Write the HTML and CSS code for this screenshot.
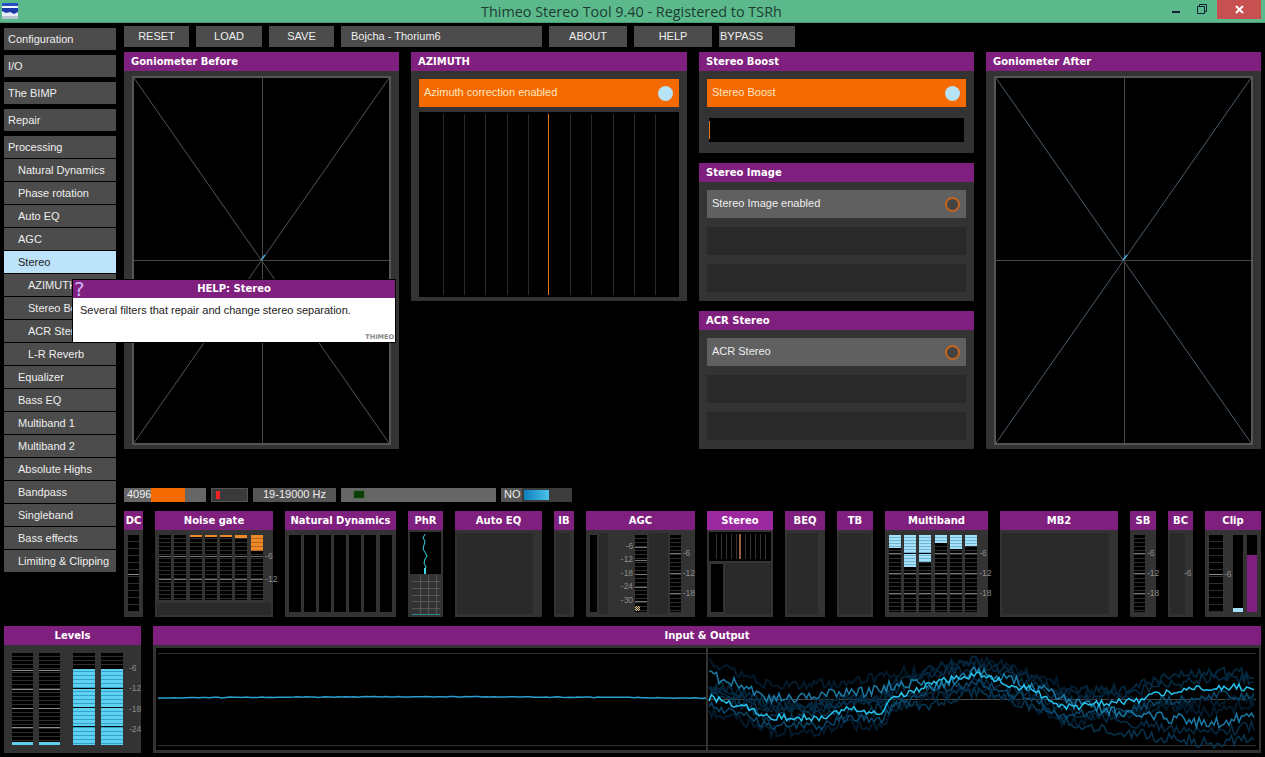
FILE: index.html
```html
<!DOCTYPE html>
<html lang="en">
<head>
    <meta charset="UTF-8">
    <title>Thimeo Stereo Tool 9.40 - Registered to TSRh</title>
    <link rel="stylesheet" href="styles.css">
</head>
<body>
    <div class="titlebar">
        <svg class="app-icon" width="16" height="16" viewBox="0 0 16 16">
            <rect width="16" height="16" fill="#e8eef5"/>
            <rect width="16" height="3" fill="#2a4fc0"/>
            <rect y="3" width="16" height="2" fill="#f4f8ff"/>
            <path d="M0 5H16V9L12 11L8 9L4 10L0 8Z" fill="#1b3aa8"/>
            <rect y="13" width="16" height="3" fill="#b8c4d0"/>
        </svg>
        <div class="title-text">Thimeo Stereo Tool 9.40 - Registered to TSRh</div>
        <div class="win-buttons">
            <div class="win-min"></div>
            <svg class="win-restore" width="10" height="10" viewBox="0 0 10 10">
                <path d="M2.5 2.5V.5H9.5V7.5H7.5M.5 2.5H7.5V9.5H.5Z" fill="none" stroke="#123" stroke-width="1"/>
            </svg>
            <div class="win-close">
                <svg width="9" height="9" viewBox="0 0 9 9"><path d="M1 1L8 8M8 1L1 8" stroke="#fff" stroke-width="2"/></svg>
            </div>
        </div>
    </div>

    <div class="main">
        <div class="side">
            <div class="nav nav-top">Configuration</div>
            <div class="nav nav-top">I/O</div>
            <div class="nav nav-top">The BIMP</div>
            <div class="nav nav-top">Repair</div>
            <div class="nav">Processing</div>
            <div class="nav lvl1">Natural Dynamics</div>
            <div class="nav lvl1">Phase rotation</div>
            <div class="nav lvl1">Auto EQ</div>
            <div class="nav lvl1">AGC</div>
            <div class="nav lvl1 nav-active">Stereo</div>
            <div class="nav lvl2">AZIMUTH</div>
            <div class="nav lvl2">Stereo Boost</div>
            <div class="nav lvl2">ACR Stereo</div>
            <div class="nav lvl2">L-R Reverb</div>
            <div class="nav lvl1">Equalizer</div>
            <div class="nav lvl1">Bass EQ</div>
            <div class="nav lvl1">Multiband 1</div>
            <div class="nav lvl1">Multiband 2</div>
            <div class="nav lvl1">Absolute Highs</div>
            <div class="nav lvl1">Bandpass</div>
            <div class="nav lvl1">Singleband</div>
            <div class="nav lvl1">Bass effects</div>
            <div class="nav lvl1">Limiting &amp; Clipping</div>
        </div>

        <div class="content">
            <div class="toolbar">
                <div class="btn w65">RESET</div>
                <div class="btn w66">LOAD</div>
                <div class="btn w65">SAVE</div>
                <div class="btn btn-left w201">Bojcha - Thorium6</div>
                <div class="btn w78">ABOUT</div>
                <div class="btn w78">HELP</div>
                <div class="btn btn-bypass w76">BYPASS</div>
            </div>

            <div class="panels">
                <div class="col">
                    <div class="panel panel-gonio">
                        <div class="panel-head">Goniometer Before</div>
                        <div class="gonio">
                            <svg width="255" height="365" viewBox="0 0 255 365">
                                <path d="M0 0L255 365M255 0L0 365" stroke="#565656" fill="none"/>
                                <path d="M128.500 0V365M0 182.500H255" stroke="#484848" fill="none"/>
                                <path d="M127 182L131 177" stroke="#3fa9d8" stroke-width="1.5"/>
                            </svg>
                        </div>
                    </div>
                </div>

                <div class="col col-wide">
                    <div class="panel panel-azimuth">
                        <div class="panel-head">AZIMUTH</div>
                        <div class="toggle toggle-on">Azimuth correction enabled<span class="dot"></span></div>
                        <div class="azi-graph">
                            <svg width="260" height="185" viewBox="0 0 260 185">
                                <path d="M24.500 2V183M45.500 2V183M66.500 2V183M88.500 2V183M109.500 2V183M151.500 2V183M172.500 2V183M194.500 2V183M215.500 2V183M236.500 2V183" stroke="#2a2a2a"/>
                                <path d="M129.500 2V183" stroke="#e07a20"/>
                            </svg>
                        </div>
                    </div>
                </div>

                <div class="col">
                    <div class="panel panel-boost">
                        <div class="panel-head">Stereo Boost</div>
                        <div class="toggle toggle-on">Stereo Boost<span class="dot"></span></div>
                        <div class="boost-bar"><div class="boost-mark"></div></div>
                    </div>
                    <div class="panel panel-image">
                        <div class="panel-head">Stereo Image</div>
                        <div class="toggle toggle-off">Stereo Image enabled<span class="dot dot-off"></span></div>
                        <div class="empty-row"></div>
                        <div class="empty-row"></div>
                    </div>
                    <div class="panel panel-image">
                        <div class="panel-head">ACR Stereo</div>
                        <div class="toggle toggle-off">ACR Stereo<span class="dot dot-off"></span></div>
                        <div class="empty-row"></div>
                        <div class="empty-row"></div>
                    </div>
                </div>

                <div class="col">
                    <div class="panel panel-gonio">
                        <div class="panel-head">Goniometer After</div>
                        <div class="gonio">
                            <svg width="255" height="365" viewBox="0 0 255 365">
                                <path d="M0 0L255 365M255 0L0 365" stroke="#4f5f6e" fill="none"/>
                                <path d="M128.500 0V365M0 182.500H255" stroke="#484848" fill="none"/>
                                <path d="M127 182L131 177" stroke="#3fa9d8" stroke-width="1.5"/>
                            </svg>
                        </div>
                    </div>
                </div>
            </div>

            <div class="status">
                <div class="st st-buffer">4096<div class="st-orange"></div></div>
                <div class="st st-red"><div class="st-redmark"></div></div>
                <div class="st st-hz">19-19000 Hz</div>
                <div class="st st-green"><div class="st-greenmark"></div></div>
                <div class="st st-no">NO<div class="st-track"><div class="st-blue"></div></div></div>
            </div>

            <div class="modules">
                <div class="mod w19">
                    <div class="mod-head">DC</div>
                    <div class="mod-body pad-meter"><div class="meter meter-wide ticks-dc m11 h77"></div></div>
                </div>

                <div class="mod w118">
                    <div class="mod-head">Noise gate</div>
                    <div class="mod-body gate">
                        <div class="gate-row">
                            <div class="meter ticks-gate m12 h65"></div>
                            <div class="meter ticks-gate m12 h65"></div>
                            <div class="meter ticks-gate m12 h65"><div class="fill fill-orange f2"></div></div>
                            <div class="meter ticks-gate m12 h65"><div class="fill fill-orange f2"></div></div>
                            <div class="meter ticks-gate m12 h65"><div class="fill fill-orange f2"></div></div>
                            <div class="meter ticks-gate m12 h65"><div class="fill fill-orange f3"></div></div>
                            <div class="meter ticks-gate m12 h65"><div class="fill fill-orange f16"></div></div>
                            <div class="scale scale-gate"><span>-6</span><span>-12</span></div>
                        </div>
                        <div class="gate-foot"></div>
                    </div>
                </div>

                <div class="mod w111">
                    <div class="mod-head">Natural Dynamics</div>
                    <div class="mod-body nd-row">
                        <div class="plain m12 h77"></div><div class="plain m12 h77"></div><div class="plain m12 h77"></div>
                        <div class="plain m12 h77"></div><div class="plain m12 h77"></div><div class="plain m12 h77"></div>
                        <div class="plain m12 h77"></div>
                    </div>
                </div>

                <div class="mod w35">
                    <div class="mod-head">PhR</div>
                    <div class="mod-body phr">
                        <svg class="phr-top" width="31" height="42" viewBox="0 0 31 42">
                            <path d="M15 2L13 6L15 9L14 13L13 17L15 20L17 24L15 27L14 31L16 35L15 38" stroke="#3fd8e8" fill="none"/>
                            <path d="M15 36V42" stroke="#3fd8e8" stroke-width="2"/>
                        </svg>
                        <svg class="phr-grid" width="31" height="43" viewBox="0 0 31 43">
                            <path d="M2 7.5H30M2 14.5H30M2 21.5H30M2 27.5H30M2 34.5H30M10.5 1V40M18.5 1V40M26.5 1V40" stroke="#555"/>
                            <path d="M2 40.5H30" stroke="#2a8a90"/>
                        </svg>
                    </div>
                </div>

                <div class="mod w87">
                    <div class="mod-head">Auto EQ</div>
                    <div class="mod-body pad-inner"><div class="inner w76"></div></div>
                </div>

                <div class="mod w20">
                    <div class="mod-head">IB</div>
                    <div class="mod-body pad-inner"><div class="inner w14"></div></div>
                </div>

                <div class="mod w109">
                    <div class="mod-head">AGC</div>
                    <div class="mod-body agc">
                        <div class="plain m11 h77"></div>
                        <div class="inner w15 agc-h"></div>
                        <div class="scale scale-agc"><span>-6</span><span>-12</span><span>-18</span><span>-24</span><span>-30</span></div>
                        <div class="meter ticks-agc m12 h77"><div class="checker"></div></div>
                        <div class="inner w30 agc-h"></div>
                        <div class="meter ticks-20 m11 h77"></div>
                        <div class="scale scale-20"><span>-6</span><span>-12</span><span>-18</span></div>
                    </div>
                </div>

                <div class="mod w66 mod-active">
                    <div class="mod-head">Stereo</div>
                    <div class="mod-body st-mod">
                        <svg class="st-top" width="62" height="29" viewBox="0 0 62 29">
                            <path d="M7.5 2V27M12.500 2V27M17.500 2V27M22.500 2V27M27.500 2V27M36.500 2V27M41.500 2V27M46.500 2V27M51.500 2V27M56.500 2V27" stroke="#333"/>
                            <path d="M31 2V27" stroke="#c88058" stroke-width="1.5"/>
                        </svg>
                        <div class="st-low">
                            <div class="plain m12 st-low-m"></div>
                            <div class="inner w46 st-low-i"></div>
                        </div>
                    </div>
                </div>

                <div class="mod w40">
                    <div class="mod-head">BEQ</div>
                    <div class="mod-body pad-inner"><div class="inner w31"></div></div>
                </div>

                <div class="mod w36">
                    <div class="mod-head">TB</div>
                    <div class="mod-body pad-inner"><div class="inner w32"></div></div>
                </div>

                <div class="mod w103">
                    <div class="mod-head">Multiband</div>
                    <div class="mod-body mb">
                        <div class="meter ticks-20 m12 h77"><div class="fill fill-light f13"></div></div>
                        <div class="meter ticks-20 m12 h77"><div class="fill fill-light f32"></div></div>
                        <div class="meter ticks-20 m12 h77"><div class="fill fill-light f27"></div></div>
                        <div class="meter ticks-20 m12 h77"><div class="fill fill-light f8"></div></div>
                        <div class="meter ticks-20 m12 h77"><div class="fill fill-light f14"></div></div>
                        <div class="meter ticks-20 m12 h77"><div class="fill fill-light f11"></div></div>
                        <div class="scale scale-20"><span>-6</span><span>-12</span><span>-18</span></div>
                    </div>
                </div>

                <div class="mod w118">
                    <div class="mod-head">MB2</div>
                    <div class="mod-body pad-inner"><div class="inner w107"></div></div>
                </div>

                <div class="mod w26">
                    <div class="mod-head">SB</div>
                    <div class="mod-body pad-meter sb">
                        <div class="meter ticks-20 m11 h77"></div>
                        <div class="scale scale-20"><span>-6</span><span>-12</span><span>-18</span></div>
                    </div>
                </div>

                <div class="mod w25">
                    <div class="mod-head">BC</div>
                    <div class="mod-body pad-inner bc">
                        <div class="inner w15"></div>
                        <div class="scale scale-bc"><span>-6</span></div>
                    </div>
                </div>

                <div class="mod w56">
                    <div class="mod-head">Clip</div>
                    <div class="mod-body clip">
                        <div class="meter meter-wide ticks-clip clip-m1 h77"></div>
                        <div class="scale scale-clip"><span>-6</span></div>
                        <div class="clip-bar"><div class="clip-blue"></div></div>
                        <div class="clip-bar clip-bar3"><div class="clip-purple"></div></div>
                    </div>
                </div>
            </div>
        </div>
    </div>

    <div class="bottom">
        <div class="mod levels">
            <div class="mod-head">Levels</div>
            <div class="mod-body lev">
                <div class="meter ticks-lev lev-a"><div class="fill-level f-low"></div></div>
                <div class="meter ticks-lev lev-a"><div class="fill-level f-low"></div></div>
                <div class="meter ticks-lev lev-b"><div class="fill-level f-high"></div></div>
                <div class="meter ticks-lev lev-b"><div class="fill-level f-high"></div></div>
                <div class="scale scale-lev"><span>-6</span><span>-12</span><span>-18</span><span>-24</span></div>
            </div>
        </div>
        <div class="mod scope-mod">
            <div class="mod-head">Input &amp; Output</div>
            <div class="mod-body scope-body">
                <svg id="scope" width="1103" height="102" viewBox="0 0 1103 102">
                    <path d="M2 5.500H1100M2 97.500H1100" stroke="#2e2e2e"/>
                    <path d="M552 51.500H1100" stroke="#4a4a4a"/>
                    <path d="M551 0V102" stroke="#333" stroke-width="2"/>
                </svg>
            </div>
        </div>
    </div>

    <div class="help">
        <div class="help-head"><span class="help-q">?</span>HELP: Stereo</div>
        <div class="help-body">
            Several filters that repair and change stereo separation.
            <div class="help-brand">THIMEO</div>
        </div>
    </div>

    <script src="script.js"></script>
</body>
</html>
```

FILE: styles.css
```css
* {
    box-sizing: border-box;
}

body {
    margin: 0;
    width: 1265px;
    height: 757px;
    overflow: hidden;
    background: #000;
    color: #eee;
    font-family: "Liberation Sans", sans-serif;
    font-size: 11px;
    position: relative;
}

svg {
    display: block;
}

/* title bar */
.titlebar {
    height: 23px;
    background: #5bb98c;
    border-bottom: 1px solid #4a9a74;
    display: flex;
    padding-left: 2px;
}

.app-icon {
    margin-top: 3px;
}

.title-text {
    position: absolute;
    left: 481px;
    top: 1px;
    color: #1d3d30;
    font-family: "Open Sans", sans-serif;
    font-size: 14.4px;
    line-height: 21px;
    white-space: nowrap;
}

.win-buttons {
    margin-left: auto;
    margin-right: 4px;
    display: flex;
}

.win-min {
    width: 8px;
    height: 2px;
    background: #123;
    margin-top: 11px;
    margin-right: 17px;
}

.win-restore {
    margin-top: 4px;
    margin-right: 10px;
}

.win-close {
    width: 44px;
    height: 19px;
    background: #c75050;
    display: flex;
    align-items: center;
    justify-content: center;
}

/* sidebar + content */
.main {
    display: flex;
    gap: 8px;
    padding: 3px 4px 0;
    height: 603px;
}

.side {
    width: 112px;
    padding-top: 2px;
}

.nav {
    height: 22px;
    line-height: 23px;
    background: #4c4c4c;
    padding-left: 4px;
    margin-bottom: 1px;
    white-space: nowrap;
}

.nav-top {
    margin-bottom: 5px;
}

.lvl1 {
    padding-left: 14px;
}

.lvl2 {
    padding-left: 24px;
}

.nav-active {
    background: #bde3fa;
    color: #222;
}

.content {
    width: 1137px;
}

.toolbar {
    display: flex;
    gap: 7px;
    height: 21px;
}

.btn {
    background: #4c4c4c;
    line-height: 20px;
    text-align: center;
}

.btn-left {
    text-align: left;
    padding-left: 10px;
}

.btn-bypass {
    text-align: left;
    padding-left: 1px;
}

.w65 { width: 65px; }
.w66 { width: 66px; }
.w201 { width: 201px; }
.w78 { width: 78px; }
.w76 { width: 76px; }

/* big panels */
.panels {
    display: flex;
    gap: 12px;
    margin-top: 5px;
    height: 397px;
}

.col {
    width: 275px;
    display: flex;
    flex-direction: column;
    gap: 10px;
}

.col-wide {
    width: 276px;
}

.panel {
    background: #333;
}

.panel-head {
    height: 19px;
    background: #80207e;
    color: #fff;
    font-family: "DejaVu Sans", sans-serif;
    font-weight: bold;
    font-size: 10px;
    line-height: 19px;
    padding-left: 7px;
    margin-bottom: 8px;
}

.panel-gonio {
    height: 397px;
}

.panel-gonio .panel-head {
    margin-bottom: 5px;
}

.gonio {
    margin-left: 8px;
    width: 259px;
    height: 369px;
    border: 2px solid #555;
    background: #000;
}

.panel-azimuth {
    height: 249px;
}

.panel-boost {
    height: 101px;
}

.panel-image {
    height: 138px;
}

.toggle {
    height: 28px;
    margin: 0 8px;
    padding: 0 5px;
    line-height: 27px;
    display: flex;
    justify-content: space-between;
    width: 259px;
}

.col-wide .toggle {
    width: 260px;
}

.toggle-on {
    background: #f56a00;
    color: #ffe6c0;
}

.toggle-off {
    background: #606060;
}

.dot {
    width: 15px;
    height: 15px;
    border-radius: 50%;
    background: #b8e2f6;
    margin-top: 7px;
    margin-right: 1px;
}

.dot-off {
    background: #444;
    border: 2px solid #c8641c;
}

.azi-graph {
    margin: 5px 8px 0;
    width: 260px;
    height: 185px;
    background: #000;
}

.boost-bar {
    margin: 11px 10px 0;
    width: 255px;
    height: 24px;
    background: #000;
    padding-top: 3px;
}

.boost-mark {
    width: 1px;
    height: 18px;
    background: #e07a20;
}

.empty-row {
    height: 28px;
    margin: 9px 8px 0;
    width: 259px;
    background: #292929;
}

/* status row */
.status {
    display: flex;
    gap: 5px;
    margin-top: 39px;
    height: 14px;
}

.st {
    height: 14px;
    line-height: 13px;
    background: #666;
}

.st-buffer {
    width: 82px;
    padding-left: 3px;
    display: flex;
}

.st-orange {
    width: 34px;
    margin-left: 0;
    background: #f56a00;
}

.st-red {
    width: 37px;
    background: #3a3a3a;
    border: 1px solid #555;
    padding: 2px 4px;
}

.st-redmark {
    width: 4px;
    height: 8px;
    background: #ee2222;
}

.st-hz {
    width: 83px;
    background: #555;
    text-align: center;
}

.st-green {
    width: 155px;
    padding: 3px 13px;
}

.st-greenmark {
    width: 10px;
    height: 7px;
    background: #0a3f0a;
    box-shadow: 0 0 0 1px #4f6a4f;
}

.st-no {
    width: 71px;
    padding-left: 3px;
    display: flex;
    gap: 1px;
    background: #555;
}

.st-track {
    width: 52px;
    background: #3c3c3c;
    padding: 2px;
}

.st-blue {
    width: 25px;
    height: 10px;
    background: linear-gradient(to right, #0d7fc0, #4cc4ea);
}

/* module row */
.modules {
    display: flex;
    gap: 12px;
    margin-top: 9px;
    height: 106px;
}

.mod {
    background: #333;
    flex: none;
}

.mod-head {
    height: 19px;
    background: #80207e;
    color: #fff;
    font-family: "DejaVu Sans", sans-serif;
    font-weight: bold;
    font-size: 10px;
    line-height: 19px;
    text-align: center;
    white-space: nowrap;
    overflow: hidden;
}

.mod-active .mod-head {
    background: #9b289f;
}

.mod-body {
    height: 87px;
    display: flex;
}

.w19 { width: 19px; }
.w118 { width: 118px; }
.w111 { width: 111px; }
.w35 { width: 35px; }
.w87 { width: 87px; }
.w20 { width: 20px; }
.w109 { width: 109px; }
.w40 { width: 40px; }
.w36 { width: 36px; }
.w103 { width: 103px; }
.w26 { width: 26px; }
.w25 { width: 25px; }
.w56 { width: 56px; }
.w14 { width: 14px; }
.w15 { width: 15px; }
.w30 { width: 30px; }
.w31 { width: 31px; }
.w32 { width: 32px; }
.w46 { width: 46px; }
.w107 { width: 107px; }

.mod.w66 { width: 66px; }
.inner.w76 { width: 76px; }

.m11 { width: 11px; }
.m12 { width: 12px; }
.h65 { height: 65px; }
.h77 { height: 77px; }

.pad-meter {
    padding: 5px 4px 0;
}

.pad-inner {
    padding: 3px 2px 3px;
}

.inner {
    background: #2a2a2a;
    height: 81px;
}

.plain {
    background: #000;
}

.meter {
    background-color: #000;
    background-image:
        repeating-linear-gradient(#8a8a8a 0 1px, transparent 1px 200px),
        repeating-linear-gradient(#000 0 3px, #2e2e2e 3px 4px);
    background-repeat: no-repeat, repeat;
    position: relative;
    flex: none;
}

.meter-wide {
    background-image:
        repeating-linear-gradient(#8a8a8a 0 1px, transparent 1px 200px),
        repeating-linear-gradient(#000 0 6px, #2e2e2e 6px 7px);
}

.ticks-gate {
    background-image:
        repeating-linear-gradient(#777 0 1px, transparent 1px 23px),
        repeating-linear-gradient(#000 0 3px, #2e2e2e 3px 4px);
    background-position: 0 21px, 0 0;
}

.ticks-20 {
    background-image:
        repeating-linear-gradient(#777 0 1px, transparent 1px 20px),
        repeating-linear-gradient(#000 0 3px, #2e2e2e 3px 4px);
    background-position: 0 18px, 0 0;
}

.ticks-agc {
    background-image:
        repeating-linear-gradient(#777 0 1px, transparent 1px 13.400px),
        repeating-linear-gradient(#000 0 3px, #2e2e2e 3px 4px);
    background-position: 0 12px, 0 0;
}

.ticks-dc,
.ticks-clip {
    background-position: 0 39px, 0 0;
    background-size: 100% 1px, auto;
}

.ticks-lev {
    background-image:
        repeating-linear-gradient(#8a8a8a 0 1px, transparent 1px 19px),
        repeating-linear-gradient(#000 0 3px, #2e2e2e 3px 4px);
    background-position: 0 17px, 0 0;
}

.fill {
    background:
        linear-gradient(#000, #000) 0 18px / 100% 1px no-repeat,
        repeating-linear-gradient(#a6e0f8 0 2px, #6fb6d4 2px 3px);
}

.fill-orange {
    background: repeating-linear-gradient(#ec8a2a 0 3px, #b8641c 3px 4px);
}

.f2 { height: 2px; }
.f3 { height: 3px; }
.f8 { height: 8px; }
.f11 { height: 11px; }
.f13 { height: 13px; }
.f14 { height: 14px; }
.f16 { height: 16px; }
.f27 { height: 27px; }
.f32 { height: 32px; }

.scale {
    color: #8c8c8c;
    font-family: "Liberation Sans", sans-serif;
    font-size: 8.5px;
    display: grid;
    flex: none;
}

.scale span {
    line-height: 10px;
    height: 10px;
}

.scale-gate {
    margin-left: 2px;
    padding-top: 16px;
    grid-auto-rows: 23px;
}

.scale-20 {
    margin-left: 2px;
    padding-top: 13px;
    grid-auto-rows: 20px;
}

.scale-agc {
    width: 25px;
    text-align: right;
    padding: 6px 2px 0 0;
    grid-auto-rows: 13.4px;
}

.scale-bc {
    margin-left: -1px;
    padding-top: 35px;
}

.scale-clip {
    margin-left: 1px;
    padding-top: 34px;
    width: 9px;
}

/* module contents */
.gate {
    flex-direction: column;
    padding: 5px 0 0 4px;
}

.gate-row {
    display: flex;
    gap: 3.3px;
    height: 65px;
}

.gate-row .scale {
    margin-left: -1px;
}

.gate-foot {
    height: 12px;
    width: 114px;
    margin: 3px 0 0 -2px;
    background: #2a2a2a;
}

.nd-row {
    padding: 5px 4px 0;
    gap: 3.100px;
}

.phr {
    flex-direction: column;
    padding: 2px 2px 0;
}

.phr-top {
    background: #000;
}

.agc {
    padding: 5px 0 0 4px;
}

.agc .inner,
.agc-h {
    height: 81px;
    margin: -2px 2px 0;
}

.st-mod {
    flex-direction: column;
    padding: 2px 2px 0;
}

.st-top {
    background: #000;
}

.st-low {
    display: flex;
    gap: 2px;
    margin-top: 2px;
    padding-left: 2px;
}

.st-low-m {
    height: 48px;
    margin-top: 1px;
}

.st-low-i {
    height: 51px;
    width: 46px;
}

.mb {
    padding: 5px 0 0 4px;
    gap: 3.200px;
}

.mb .scale {
    margin-left: -1px;
}

.bc .inner {
    flex: none;
}

.clip {
    padding: 5px 0 0 4px;
}

.clip-m1 {
    width: 14px;
}

.clip-bar {
    width: 10px;
    height: 77px;
    background: #000;
    margin-right: 4px;
    display: flex;
    flex-direction: column;
    justify-content: flex-end;
}

.clip-blue {
    height: 4px;
    background: #a6e0f8;
}

.clip-purple {
    height: 57px;
    background: #80207e;
}

/* bottom strip */
.bottom {
    display: flex;
    gap: 12px;
    padding: 0 4px;
}

.levels {
    width: 137px;
}

.lev {
    height: 108px;
    padding: 8px 0 0 8px;
}

.lev-a,
.lev-b {
    width: 21px;
    height: 92px;
    display: flex;
    flex-direction: column;
    justify-content: flex-end;
}

.lev-a {
    margin-right: 6px;
}

.lev-a + .lev-b {
    margin-left: 7px;
}

.lev-b {
    width: 22px;
    margin-right: 6px;
}

.fill-level {
    background:
        repeating-linear-gradient(transparent 0 18px, #000 18px 19px) 0 2px,
        repeating-linear-gradient(#5fd0f0 0 3px, #2fa4cc 3px 4px);
}

.f-low {
    height: 3px;
}

.f-high {
    height: 77px;
}

.scale-lev {
    padding-top: 10px;
    margin-left: 0;
    grid-auto-rows: 20.300px;
}

.scope-mod {
    width: 1108px;
}

.scope-body {
    height: 108px;
    padding: 3px 2px 0 3px;
}

#scope {
    background: #000;
}

.checker {
    position: absolute;
    left: 0;
    top: 71px;
    width: 5px;
    height: 5px;
    background: repeating-conic-gradient(#e8c080 0 25%, #333 0 50%) 0 0 / 2px 2px;
}

/* help popup */
.help {
    position: absolute;
    left: 72px;
    top: 279px;
    width: 324px;
    height: 64px;
    border: 1px solid #000;
    background: #fff;
}

.help-head {
    height: 18px;
    background: #80207e;
    color: #fff;
    font-family: "DejaVu Sans", sans-serif;
    font-weight: bold;
    font-size: 10px;
    line-height: 18px;
    text-align: center;
    position: relative;
}

.help-q {
    position: absolute;
    left: 1px;
    top: -1px;
    color: #d0b0f0;
    font-size: 20px;
    font-weight: normal;
    line-height: 20px;
}

.help-body {
    height: 44px;
    border: 1px solid #fff;
    color: #222;
    padding: 4px 6px;
    line-height: 14px;
    position: relative;
}

.help-brand {
    position: absolute;
    right: 0;
    bottom: -1px;
    color: #888;
    font-family: "DejaVu Sans", sans-serif;
    font-weight: bold;
    font-size: 6.500px;
    line-height: 9px;
}
```

FILE: script.js
```js
// draws the scope traces in the Input & Output panel
const svg = document.getElementById('scope');
const ns = 'http://www.w3.org/2000/svg';

let seed = 71;
function rnd() {
    seed = (seed * 16807) % 2147483647;
    return seed / 2147483647 - 0.5;
}

// curves are [x, y] in scope coordinates
const bright = [[553, 50], [580, 57], [616, 69], [659, 70], [695, 62], [720, 65], [745, 47], [785, 32], [821, 27], [868, 40], [908, 59], [969, 54], [1012, 44], [1063, 39], [1100, 40]];
const mid = [[553, 28], [580, 35], [616, 50], [667, 47], [707, 44], [745, 36], [778, 37], [821, 24], [843, 29], [886, 42], [922, 57], [976, 65], [1012, 70], [1055, 75], [1100, 68]];

function curveY(curve, x) {
    for (let i = 1; i < curve.length; i++) {
        if (x <= curve[i][0]) {
            const a = curve[i - 1];
            const b = curve[i];
            const t = (x - a[0]) / (b[0] - a[0]);
            const s = t * t * (3 - 2 * t);
            return a[1] + (b[1] - a[1]) * s;
        }
    }
    return curve[curve.length - 1][1];
}

function trace(curve, offset, noise, color, width) {
    let points = '';
    for (let x = 553; x <= 1100; x += 2.5) {
        const y = curveY(curve, x) + offset + rnd() * noise;
        points += x + ',' + y.toFixed(1) + ' ';
    }
    const line = document.createElementNS(ns, 'polyline');
    line.setAttribute('points', points);
    line.setAttribute('fill', 'none');
    line.setAttribute('stroke', color);
    line.setAttribute('stroke-width', width);
    svg.appendChild(line);
}

trace(mid, -12, 12, '#031a2c', 2);
trace(bright, 14, 12, '#031a2c', 2);
trace(bright, -14, 12, '#04243a', 2);
trace(mid, 10, 11, '#052c46', 1.5);
trace(bright, -8, 11, '#052c46', 1.5);
trace(mid, 20, 11, '#063552', 1.5);
trace(bright, 8, 9, '#09466a', 1.5);
trace(mid, 0, 11, '#1a7aa6', 1.5);
trace(bright, 0, 7, '#25c0ec', 1.5);

// flat input trace
let flat = '';
for (let x = 2; x <= 550; x += 4) {
    const y = 50 - Math.sin(x / 170) * 1.2 + rnd() * 0.8;
    flat += x + ',' + y.toFixed(1) + ' ';
}
const input = document.createElementNS(ns, 'polyline');
input.setAttribute('points', flat);
input.setAttribute('fill', 'none');
input.setAttribute('stroke', '#2a9fd0');
input.setAttribute('stroke-width', '1.5');
svg.appendChild(input);
```
